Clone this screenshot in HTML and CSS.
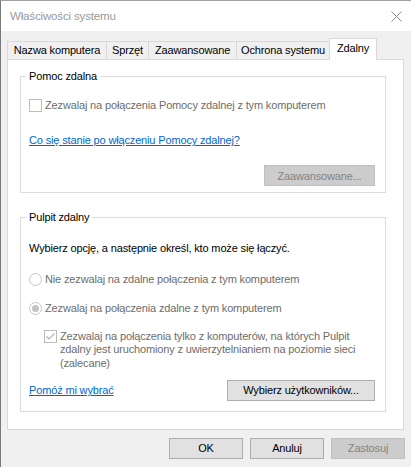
FILE: index.html
```html
<!DOCTYPE html>
<html lang="pl">
<head>
<meta charset="utf-8">
<title>Właściwości systemu</title>
<link rel="stylesheet" href="styles.css">
</head>
<body>
<div class="window">
  <div class="titlebar">
    <span class="title">Właściwości systemu</span>
    <svg class="close" width="11" height="11" viewBox="0 0 11 11" aria-label="Zamknij">
      <path d="M0.5 0.5 L10.5 10.5 M10.5 0.5 L0.5 10.5" stroke="#8a8a8a" stroke-width="1" fill="none"/>
    </svg>
  </div>
  <div class="client">
    <div class="tabs">
      <div class="tab t1">Nazwa komputera</div>
      <div class="tab t2">Sprzęt</div>
      <div class="tab t3">Zaawansowane</div>
      <div class="tab t4">Ochrona systemu</div>
      <div class="tab t5 selected">Zdalny</div>
    </div>
    <div class="panel">
      <fieldset class="group g1">
        <legend>Pomoc zdalna</legend>
        <div class="group-body">
          <div class="option disabled first-check">
            <svg class="box" width="13" height="13" viewBox="0 0 13 13"><rect x="0.5" y="0.5" width="12" height="12" fill="#fff" stroke="#bcbcbc"/></svg>
            <span>Zezwalaj na połączenia Pomocy zdalnej z tym komputerem</span>
          </div>
          <a class="link help-link" href="#">Co się stanie po włączeniu Pomocy zdalnej?</a>
          <div class="btn btn-disabled btn-advanced">Zaawansowane...</div>
        </div>
      </fieldset>
      <fieldset class="group g2">
        <legend>Pulpit zdalny</legend>
        <div class="group-body">
          <div class="intro">Wybierz opcję, a następnie określ, kto może się łączyć.</div>
          <div class="option disabled radio1">
            <svg class="box" width="13" height="13" viewBox="0 0 13 13"><circle cx="6.5" cy="6.5" r="6" fill="#fff" stroke="#c4c4c4"/></svg>
            <span>Nie zezwalaj na zdalne połączenia z tym komputerem</span>
          </div>
          <div class="option disabled radio2">
            <svg class="box" width="13" height="13" viewBox="0 0 13 13"><circle cx="6.5" cy="6.5" r="6" fill="#fff" stroke="#c4c4c4"/><circle cx="6.5" cy="6.5" r="3.5" fill="#c4c4c4"/></svg>
            <span>Zezwalaj na połączenia zdalne z tym komputerem</span>
          </div>
          <div class="option disabled nla">
            <svg class="box" width="13" height="13" viewBox="0 0 13 13"><rect x="0.5" y="0.5" width="12" height="12" fill="#fff" stroke="#bcbcbc"/><path d="M2.5 6.5 L5 9 L10.5 3.5" stroke="#b4b4b4" stroke-width="1.2" fill="none"/></svg>
            <span class="multi">Zezwalaj na połączenia tylko z komputerów, na których Pulpit<br>zdalny jest uruchomiony z uwierzytelnianiem na poziomie sieci<br>(zalecane)</span>
          </div>
          <div class="bottom-row">
            <a class="link" href="#">Pomóż mi wybrać</a>
            <div class="btn btn-users">Wybierz użytkowników...</div>
          </div>
        </div>
      </fieldset>
    </div>
    <div class="dialog-buttons">
      <div class="btn btn-dlg">OK</div>
      <div class="btn btn-dlg">Anuluj</div>
      <div class="btn btn-dlg btn-disabled">Zastosuj</div>
    </div>
  </div>
</div>
</body>
</html>
```
FILE: styles.css
```css
html, body {
  margin: 0;
  padding: 0;
  background: #f0f0f0;
  overflow: hidden;
}

body {
  font-family: "Liberation Sans", Arial, sans-serif;
  font-size: 11px;
  letter-spacing: -0.15px;
  color: #000;
}

.window {
  width: 411px;
  height: 467px;
  box-sizing: border-box;
  border-top: 1px solid #a0a0a0;
  border-left: 1px solid #7a7a7a;
  background: #f0f0f0;
}

.titlebar {
  height: 30px;
  background: #fff;
  display: flex;
  align-items: center;
  justify-content: space-between;
  padding: 0 9px 0 9px;
}

.title {
  font-size: 11.5px;
  color: #999;
}

.close {
  display: block;
}

.client {
  padding: 7px 6px 0 6px;
}

.tabs {
  display: flex;
  align-items: flex-end;
  height: 21px;
}

.tab {
  box-sizing: border-box;
  height: 18px;
  border: 1px solid #d9d9d9;
  border-bottom: none;
  background: #f0f0f0;
  margin-right: -1px;
  display: flex;
  align-items: center;
  justify-content: center;
  line-height: 15px;
  white-space: nowrap;
}

.t1 { width: 100px; }
.t2 { width: 43px; }
.t3 { width: 89px; }
.t4 { width: 94px; }
.t5 { width: 48px; }

.tab.selected {
  height: 22px;
  margin-bottom: -1px;
  background: #fff;
  align-items: flex-start;
  padding-top: 2px;
  position: relative;
  z-index: 1;
}

.panel {
  width: 397px;
  box-sizing: border-box;
  border: 1px solid #d9d9d9;
  background: #fff;
  padding: 9px 0 17px 12px;
}

.group {
  margin: 0;
  width: 366px;
  min-width: 0;
  box-sizing: border-box;
  border: 1px solid #dcdcdc;
  padding: 0 10px 6px 8px;
}

.group legend {
  padding: 0 3px;
  margin-left: -3px;
  line-height: 15px;
}

.g2 {
  margin-top: 17px;
  padding-bottom: 10px;
}

.group-body {
  display: flex;
  flex-direction: column;
  align-items: flex-start;
}

.option {
  display: flex;
  align-items: center;
  gap: 3px;
  height: 15px;
  line-height: 15px;
  white-space: nowrap;
}

.option .box {
  display: block;
  flex: none;
}

.disabled {
  color: #6d6d6d;
}

.first-check { margin-top: 14px; }

.link {
  color: #0066cc;
  text-decoration: underline;
  line-height: 15px;
  white-space: nowrap;
}

.help-link { margin-top: 20px; }

.btn {
  box-sizing: border-box;
  height: 21px;
  border: 1px solid #adadad;
  background: #e1e1e1;
  color: #000;
  display: flex;
  align-items: center;
  justify-content: center;
  white-space: nowrap;
}

.btn-disabled {
  background: #cccccc;
  border-color: #bfbfbf;
  color: #838383;
}

.btn-advanced {
  margin-top: 17px;
  align-self: flex-end;
  width: 111px;
}

.intro {
  margin-top: 16px;
  line-height: 15px;
  white-space: nowrap;
}

.radio1 { margin-top: 16px; }
.radio2 { margin-top: 14px; }

.nla {
  margin-top: 14px;
  margin-left: 15px;
  height: auto;
  align-items: flex-start;
}

.nla .multi {
  line-height: 13.33px;
}

.bottom-row {
  margin-top: 10px;
  align-self: stretch;
  display: flex;
  justify-content: space-between;
  align-items: center;
}

.btn-users {
  width: 148px;
}

.dialog-buttons {
  display: flex;
  justify-content: flex-end;
  gap: 7px;
  margin-top: 8px;
}

.btn-dlg {
  width: 74px;
}
```
